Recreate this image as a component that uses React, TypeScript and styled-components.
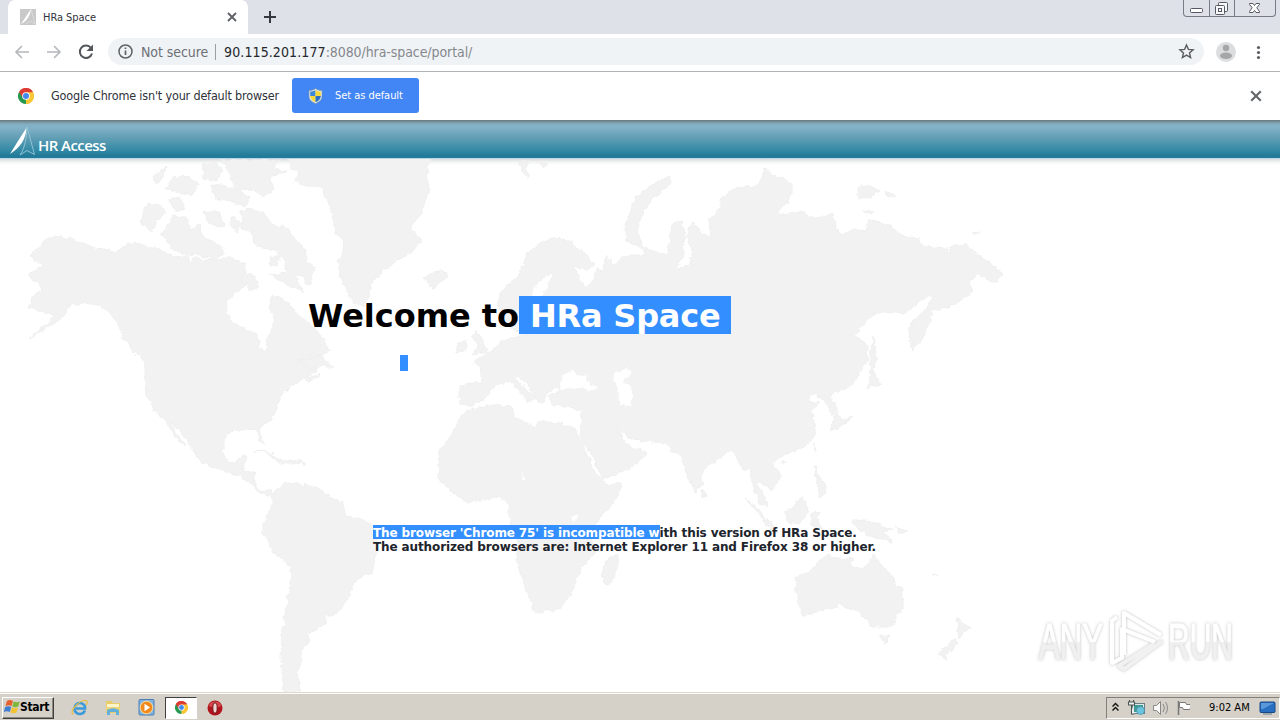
import React from "react";
import styled, { createGlobalStyle } from "styled-components";

const ui = `"DejaVu Sans Condensed", "DejaVu Sans", sans-serif`;
const verdana = `"DejaVu Sans", "Liberation Sans", sans-serif`;

const GlobalStyle = createGlobalStyle`
  * { box-sizing: border-box; }
  body { margin: 0; overflow: hidden; background: #fff; }
  svg { display: block; flex: none; }
`;

const Screen = styled.div`
  width: 1280px;
  height: 720px;
  display: flex;
  flex-direction: column;
  background: #fff;
  overflow: hidden;
`;

const TabStrip = styled.header`
  height: 34px;
  flex: none;
  display: flex;
  align-items: flex-start;
  padding: 0 4px 0 8px;
  background: #dee1e7;
`;

const Tab = styled.div`
  width: 240px;
  height: 34px;
  display: flex;
  align-items: center;
  padding: 0 11px 0 12px;
  background: #fff;
  border-radius: 7px 7px 0 0;
`;

const Label = styled.span<{ $size: number; $color?: string; $spacing?: number }>`
  font: ${(p) => p.$size}px/16px ${ui};
  color: ${(p) => p.$color ?? "#30333a"};
  letter-spacing: ${(p) => p.$spacing ?? 0}px;
  white-space: pre;
`;

const TabTitle = styled(Label)`
  flex: 1;
  margin-left: 7px;
  padding-top: 1px;
`;

const NewTab = styled.div`
  padding: 11px 0 0 16px;
`;

const WindowControls = styled.div`
  display: flex;
  height: 17px;
  margin-left: auto;
  border: 1px solid #777b85;
  border-top: 0;
  border-radius: 0 0 4px 4px;
`;

const WindowControl = styled.div<{ $width: number }>`
  width: ${(p) => p.$width}px;
  display: flex;
  justify-content: center;
  & + & { border-left: 1px solid #777b85; }
`;

const Toolbar = styled.div`
  height: 38px;
  flex: none;
  display: flex;
  align-items: center;
  padding: 0 11px 2px 12px;
  border-bottom: 1px solid #b1b3b5;
  background: #fff;
`;

const NavButtons = styled.div`
  display: flex;
  gap: 12px;
  width: 96px;
`;

const AddressBar = styled.div`
  flex: 1;
  height: 27px;
  display: flex;
  align-items: center;
  padding: 0 9px;
  border-radius: 14px;
  background: #f0f3f6;
`;

const Security = styled(Label)`
  margin-left: 7px;
`;

const Divider = styled.i`
  width: 1px;
  height: 16px;
  margin: 0 8px 0 7px;
  background: #9a9da2;
`;

const Url = styled(Label)`
  flex: 1;
`;

const ToolbarEnd = styled.div`
  display: flex;
  align-items: center;
  gap: 13px;
  margin-left: 12px;
`;

const InfoBar = styled.div`
  height: 48px;
  flex: none;
  display: flex;
  align-items: center;
  padding: 0 18px 1px 18px;
`;

const InfoText = styled(Label)`
  width: 258px;
  padding-left: 17px;
`;

const DefaultButton = styled.button`
  width: 127px;
  height: 35px;
  display: flex;
  align-items: center;
  gap: 12px;
  padding: 0 16px;
  border: 0;
  border-radius: 3px;
  background: #4285f4;
  margin-right: auto;
`;

const Banner = styled.div`
  height: 39px;
  flex: none;
  padding: 6px 0 0 8px;
  display: flex;
  background: linear-gradient(#68777c 0, #77959f 2px, #82adbf 4px, #84b3c8 7px, #5d9cb3 19px, #358aa6 30px, #217a98 36px, #237d9b 38px, #b9d6e4 38px);
`;

const BannerTitle = styled.span`
  font: 600 15px/20px "Open Sans", sans-serif;
  letter-spacing: -0.55px;
  color: #fff;
  margin: 9px 0 0 2px;
  white-space: pre;
`;

const Page = styled.main`
  flex: 1;
  position: relative;
  overflow: hidden;
  background: linear-gradient(#d9dddf 0, #f3f4f5 3px, #fff 6px);
`;

const Backdrop = styled.div`
  position: absolute;
  inset: 0;
`;

const Content = styled.div`
  position: relative;
  padding: 137px 0 0 308px;
`;

const Heading = styled.h1`
  margin: 0;
  height: 38px;
  display: flex;
  font: bold 32px/37px ${verdana};
  letter-spacing: -0.05px;
  color: #000;
  white-space: pre;
`;

const HeadingPart = styled.span<{ $width: number; $marked?: boolean }>`
  width: ${(p) => p.$width}px;
  padding-top: 2px;
  color: ${(p) => (p.$marked ? "#fff" : "#000")};
  background: ${(p) => (p.$marked ? "#338fff" : "none")};
  letter-spacing: ${(p) => (p.$marked ? -0.2 : -0.02)}px;
`;

const EmptyMark = styled.div`
  width: 8px;
  height: 16px;
  margin: 21px 0 155px 92px;
  background: #338fff;
`;

const Message = styled.p`
  margin: 0 0 0 65px;
  font: bold 12px/14px ${verdana};
  letter-spacing: -0.12px;
  color: #20242c;
  white-space: pre;
`;

const Marked = styled.span`
  display: inline-block;
  color: #fff;
  background: linear-gradient(#338fff 13px, transparent 13px);
  box-shadow: 0 -1px #338fff;
`;

const Watermark = styled.div`
  position: absolute;
  left: 1026px;
  top: 438px;
`;

const Taskbar = styled.footer`
  height: 28px;
  flex: none;
  display: flex;
  align-items: center;
  padding: 2px 0 0 2px;
  background: #d5d0c8;
  border-top: 1px solid #dcd9d2;
  box-shadow: inset 0 1px #fdfcfa;
`;

const StartButton = styled.div`
  width: 52px;
  height: 22px;
  display: flex;
  align-items: center;
  padding: 0 0 2px 1px;
  border: 1px solid;
  border-color: #fff #404040 #404040 #fff;
  box-shadow: inset -1px -1px #8a8680;
  font: bold 12px/16px "DejaVu Sans Condensed", sans-serif;
  letter-spacing: -0.3px;
  color: #000;
`;

const QuickLaunch = styled.div`
  display: flex;
  align-items: center;
  gap: 17px;
  margin-left: 17px;
`;

const ActiveTask = styled.div`
  width: 32px;
  height: 22px;
  display: grid;
  place-items: center;
  margin: 0 -7px 0 -7px;
  border: 1px solid;
  border-color: #404040 #fff #fff #404040;
  background: #fff;
`;

const Tray = styled.div`
  width: 174px;
  height: 22px;
  display: flex;
  align-items: center;
  margin-left: auto;
  padding-left: 4px;
  border: 1px solid;
  border-color: #85817a #fff #fff #85817a;
`;

const Clock = styled(Label)`
  margin: 0 9px 0 19px;
`;

const Cross = ({ size, color = "#5c5f64" }: { size: number; color?: string }) => (
  <svg width={size} height={size} viewBox="0 0 10 10">
    <path d="M1 1l8 8M9 1l-8 8" stroke={color} strokeWidth="1.8" />
  </svg>
);

const Arrow = ({ back }: { back?: boolean }) => (
  <svg width="20" height="20" viewBox="0 0 20 20">
    <g transform={back ? undefined : "translate(20 0) scale(-1 1)"}>
      <path d="M17 10H4M10 4L4 10l6 6" fill="none" stroke="#b5b7ba" strokeWidth="1.6" />
    </g>
  </svg>
);

const ChromeLogo = ({ size }: { size: number }) => (
  <svg width={size} height={size} viewBox="0 0 48 48">
    <path d="M24 24L3.2 12A24 24 0 0 1 44.8 12z" fill="#de3c31" />
    <path d="M24 24L44.8 12A24 24 0 0 1 24 48z" fill="#fbc735" />
    <path d="M24 24L24 48A24 24 0 0 1 3.2 12z" fill="#26994f" />
    <path d="M24 13h20.8A24 24 0 0 0 3.2 12L14.5 29.5z" fill="#de3c31" />
    <path d="M33.5 29.5L24 48A24 24 0 0 0 44.8 13H24z" fill="#fbc735" />
    <circle cx="24" cy="24" r="11.5" fill="#fff" />
    <circle cx="24" cy="24" r="9" fill="#4588ee" />
  </svg>
);

const Shield = () => (
  <svg width="15" height="16" viewBox="0 0 15 16">
    <path d="M7.500 .5C9 2 11.500 2.500 14 2.500V8c0 4-3 6-6.500 7.500C4 14 1 12 1 8V2.500C3.500 2.500 6 2 7.500 .5z" fill="#e4edf4" stroke="#8195a3" strokeWidth=".7" />
    <path d="M7.500 2C6 3 4 3.500 2.200 3.600V8h5.300z" fill="#3b86d8" />
    <path d="M7.500 2C9 3 11 3.500 12.800 3.600V8H7.500z" fill="#f5d83c" />
    <path d="M2.200 8c0 3 2.300 5 5.300 6.200V8z" fill="#f5d83c" />
    <path d="M12.800 8c0 3-2.300 5-5.300 6.200V8z" fill="#2c6fc4" />
  </svg>
);

const HrArrow = () => (
  <svg width="28" height="30" viewBox="0 0 28 30">
    <path d="M19 1C17.500 13 13 21 2 28L10 15z" fill="#fff" />
    <path d="M19 1L26.500 28.500L19 24.500L12 29C17 22 18.500 12 19 1z" fill="none" stroke="#8fc3d6" strokeWidth="1" />
  </svg>
);

const land = [
  "M55 235L78 241L95 248L108 250L114 253L125 246L135 242L143 245L155 248L165 253L172 257L188 256L190 263L195 258L210 260L222 258L232 258L240 262L246 264L244 272L250 280L244 287L235 293L228 300L226 312L232 322L245 328L258 336L260 349L267 350L266 338L273 328L274 316L270 308L272 296L285 300L295 312L303 318L316 330L325 343L330 351L318 356L300 360L306 366L317 370L305 378L290 386L283 395L277 405L274 416L265 423L258 430L264 443L259 440L256 429L240 430L225 433L223 453L228 463L237 461L242 455L247 456L243 470L255 473L255 486L261 490L272 491L271 495L260 494L250 483L237 475L219 470L200 461L192 448L178 427L170 424L186 447L176 438L165 421L154 409L147 394L145 375L145 362L135 352L124 340L118 325L110 312L98 305L80 303L70 305L62 317L49 327L29 339L46 325L55 315L50 314L35 309L28 308L33 295L42 290L40 283L26 276L35 270L43 267L30 255L38 248L45 240z",
  "M287 483L300 485L317 487L327 495L342 502L347 515L367 522L378 532L377 552L372 572L353 583L348 600L335 615L323 615L327 622L317 630L308 633L310 643L302 650L303 660L297 673L301 692L284 692L281 660L282 633L288 600L292 567L275 553L263 533L263 523L272 507L272 494z",
  "M288 156H432L426 174L429 190L424 205L420 215L411 228L421 240L412 253L395 262L382 273L372 282L369 297L363 306L353 303L346 290L340 275L338 262L343 250L344 241L335 232L333 220L328 200L320 187L305 185L294 181L300 174L292 170z",
  "M553 238L568 240L587 255L595 265L587 271L573 266L580 281L587 286L593 280L597 268L602 271L607 255L613 265L627 255L647 255L642 248L667 255L670 240L672 223L683 221L685 235L683 255L675 270L687 265L693 255L687 238L692 220L699 230L712 238L708 221L720 208V198L737 188L758 186L765 168L773 175L792 183V195L777 215L800 211L813 218L823 217L833 213L838 232L843 235L854 229L865 231L868 220L892 226L900 236L918 238L922 246L947 248L948 254L952 245L967 245L990 263L1003 273L995 283L978 275L970 283L972 293L947 308L932 310L930 321L923 338L913 351L909 331L913 321L930 305L933 295L920 301L907 313L873 313L855 335L868 345L867 361L852 385L835 393L830 397L837 408L832 416L827 403L815 393L805 400L818 404L810 411L816 428L812 440L803 447L783 455L773 463L782 477L772 490L760 482L754 482L765 497L768 508L760 503L752 484L749 468L743 470L732 450L723 455L703 470L702 483L695 492L685 470L680 455L672 450L665 443L633 440L617 428L625 443L632 447L647 452L633 467L603 480L600 470L580 437L582 409L567 407L553 405L548 396L557 393L560 386L548 392L543 403L538 402L530 388L520 376L514 379L537 398L528 402L510 381L497 385L483 400L470 407L460 403V385L482 383L480 366L473 363L492 350L502 341L520 336L526 318L518 332L505 323L498 305L500 293L520 273L527 255L543 241z",
  "M467 410L490 405L513 407L515 417L535 427L540 420L573 427L582 443L593 470L607 485L623 483L613 503L600 517L590 533L595 553L580 570L573 592L560 609L535 613L525 587L517 563L518 543L510 523L508 503L498 497L482 500L467 502L450 490L438 477L440 450L453 433L458 422z",
  "M618 553L618 566L610 585L603 583L602 575L605 562z",
  "M828 555L840 560L853 558L850 564L862 570L870 563L873 553L883 567L902 590L902 607L892 627H872L863 616L857 610L840 605L823 610L802 615L796 590L795 577L815 568L820 560z",
  "M880 636H889L885 645zM957 617L963 624L970 627L960 638L958 632zM955 638L958 643L945 658L938 654z",
  "M745 498L755 506L767 518L778 533L773 532L760 516zM783 512L792 508L802 497L809 511L800 524L788 522zM852 523L858 519L876 523L893 530L884 532L893 542L876 538L865 534zM810 514L820 512L817 519L823 530L812 526zM815 465L818 475L825 485L827 493L820 497L816 481zM830 431L837 410L842 421L854 415L846 423zM782 459L786 461L782 464zM813 445L816 444L814 451zM702 489L707 495L703 498z",
  "M873 337L877 358L873 370L880 384L867 388L871 378L870 358zM931 572L938 577L935 573zM896 527L909 531L900 534z",
  "M423 278L430 274L445 271L447 278L432 288zM477 331L483 340L488 351L473 355L478 344L471 337zM458 344L467 340L466 350L456 353zM670 176L672 183L653 198L642 215L637 231L642 248L627 242L625 225L631 210L635 198L647 188zM858 188L869 185L879 191L866 199L858 198zM885 192L896 196L889 198zM864 210L874 212L867 214zM972 233L980 232L975 236zM519 162L527 161L528 178L522 171zM537 162L549 163L543 168z",
  "M148 203L160 205L166 211L158 221L151 231L142 226L143 211zM168 225L174 216L186 217L191 231L199 224L204 238L214 240L224 253L214 259L201 255L188 254L173 251L166 239L161 234zM241 211L249 209L264 213L272 224L288 229L294 238L305 248L307 262L315 268L309 286L300 276L294 275L304 292L296 289L279 280L270 275L286 273L285 262L275 250L257 247L251 233L242 228zM153 175L166 167L164 177L155 185zM173 178L187 176L198 184L193 194L180 193L166 189zM202 164L216 162L222 171L216 182L204 178zM223 160H280L272 169L286 171L269 178L275 190L264 196L253 190L235 191L230 175zM211 185L229 187L250 197L244 207L231 202L216 199zM203 212L217 210L221 216L225 225L215 227L208 221zM231 216L241 222L238 234L231 226zM168 200L180 197L185 210L175 210zM240 278L252 272L260 287L250 290zM271 256L280 257L277 265L270 264z",
  "M253 453L261 450L275 458L280 463L293 464L305 463L300 461L288 460L275 457L263 450zM300 355L312 354L322 356L334 369L322 365L315 370L298 361zM304 379L321 374L309 382z",
].join("");

const lakes = "M563 375L573 370L578 376L587 374L586 380L597 388L593 391L580 388L560 390zM613 375L627 368L632 373L623 381L632 388V406L620 405L618 391zM552 275L545 275L533 291L534 314L521 334L537 333L560 324L546 317L543 295zM521 474L526 477L523 480zM571 516L578 514L574 522zM508 382L511 388L507 401L503 394z";

const WorldMap = () => (
  <svg width="1280" height="533" viewBox="0 159 1280 533">
    <defs>
      <filter id="coast" x="0" y="0" width="100%" height="100%">
        <feTurbulence type="fractalNoise" baseFrequency=".16" numOctaves="3" seed="4" />
        <feDisplacementMap in="SourceGraphic" scale="6" xChannelSelector="R" yChannelSelector="G" />
      </filter>
    </defs>
    <g filter="url(#coast)">
      <path d={land} fill="#f2f2f2" stroke="#efefef" strokeWidth="1" />
      <path d={lakes} fill="#fff" />
    </g>
  </svg>
);

const AnyRun = () => (
  <svg width="240" height="94" viewBox="1026 597 240 94">
    <defs>
      <filter id="halo" x="-10%" y="-20%" width="120%" height="140%">
        <feDropShadow dx="0" dy="0" stdDeviation="1.5" floodColor="#777" floodOpacity=".5" />
      </filter>
      <linearGradient id="shine" x1="0" y1="0" x2="0" y2="1">
        <stop offset=".49" stopColor="#fff" />
        <stop offset=".5" stopColor="#f0f0f0" />
      </linearGradient>
    </defs>
    <g filter="url(#halo)">
      <text x="1039" y="659" textLength="64" lengthAdjust="spacingAndGlyphs" fontFamily="Liberation Sans" fontSize="50" fill="url(#shine)" stroke="url(#shine)">ANY</text>
      <text x="1168" y="659" textLength="65" lengthAdjust="spacingAndGlyphs" fontFamily="Liberation Sans" fontSize="50" fill="url(#shine)" stroke="url(#shine)">RUN</text>
      <g fill="none" stroke="#fff" strokeWidth="4" strokeLinejoin="round">
        <path d="M1124 655V613L1161 635" />
        <path d="M1117 617L1112 621V663L1122 658V629L1155 642" />
        <path d="M1162 641L1124 669L1119 666L1154 644" stroke="#f1f1f1" />
      </g>
    </g>
  </svg>
);

export default function App() {
  return (
    <Screen>
      <GlobalStyle />
      <TabStrip>
        <Tab>
          <svg width="16" height="16" viewBox="0 0 16 16">
            <rect width="16" height="16" fill="#c9c9c9" />
            <path d="M11 0L1 15C7 12 10 7 11 0z" fill="#fff" />
            <path d="M11 0L15 15L11 12L6 15" fill="none" stroke="#dcdcdc" />
          </svg>
          <TabTitle $size={11} $spacing={-0.05}>HRa Space</TabTitle>
          <Cross size={10} />
        </Tab>
        <NewTab>
          <svg width="12" height="12" viewBox="0 0 12 12"><path d="M6 0v12M0 6h12" stroke="#35383d" strokeWidth="2" /></svg>
        </NewTab>
        <WindowControls>
          <WindowControl $width={25}>
            <svg width="25" height="16" viewBox="0 0 25 16"><rect x="6.500" y="8.500" width="12" height="4" rx="1" fill="#fff" stroke="#555963" /></svg>
          </WindowControl>
          <WindowControl $width={25}>
            <svg width="24" height="16" viewBox="0 0 24 16" fill="#f7f8fa" stroke="#555963">
              <rect x="8.500" y="2.500" width="9" height="9" rx="1" /><rect x="5.500" y="5.500" width="9" height="9" rx="1" /><rect x="8.500" y="8.500" width="3" height="3" />
            </svg>
          </WindowControl>
          <WindowControl $width={41}>
            <svg width="40" height="16" viewBox="0 0 40 16"><path d="M14.500 3.500h3.500l1.500 2 1.500-2h3.500v1l-2.700 3.300 2.700 3.700v1H21l-1.500-2-1.500 2h-3.500v-1l2.700-3.700-2.700-3.300z" fill="#fff" stroke="#555963" /></svg>
          </WindowControl>
        </WindowControls>
      </TabStrip>

      <Toolbar>
        <NavButtons>
          <Arrow back />
          <Arrow />
          <svg width="20" height="20" viewBox="0 0 20 20">
            <path d="M15 6A6.200 6.200 0 1 0 16 11.500" fill="none" stroke="#53565b" strokeWidth="2" />
            <path d="M17 2.500V9H10.500z" fill="#53565b" />
          </svg>
        </NavButtons>
        <AddressBar>
          <svg width="17" height="17" viewBox="0 0 17 17">
            <circle cx="8.500" cy="8.500" r="6.500" fill="none" stroke="#5f6368" strokeWidth="1.500" />
            <path d="M8.500 7.500V12M8.500 4.500V6" stroke="#5f6368" strokeWidth="1.700" />
          </svg>
          <Security $size={14} $color="#6c7075" $spacing={-0.08}>Not secure</Security>
          <Divider />
          <Url $size={14} $color="#85888d" $spacing={-0.08}>
            <Label $size={14} $color="#24272c" $spacing={0.1}>90.115.201.177</Label>:8080/hra-space/portal/
          </Url>
          <svg width="17" height="17" viewBox="0 0 17 17">
            <path d="M8.500 2l1.900 4.400 4.700.4-3.600 3.100 1.100 4.700-4.100-2.500-4.100 2.500 1.100-4.700-3.600-3.100 4.700-.4z" fill="none" stroke="#5a5d62" strokeWidth="1.400" />
          </svg>
        </AddressBar>
        <ToolbarEnd>
          <svg width="20" height="20" viewBox="0 0 20 20">
            <circle cx="10" cy="10" r="10" fill="#dcdddf" /><circle cx="10" cy="6" r="3.200" fill="#a5a6a8" /><ellipse cx="10" cy="13.700" rx="6" ry="3.200" fill="#a5a6a8" />
          </svg>
          <svg width="20" height="20" viewBox="0 0 20 20" fill="#5a5d62"><circle cx="9.500" cy="5.500" r="1.600" /><circle cx="9.500" cy="10.500" r="1.600" /><circle cx="9.500" cy="15.500" r="1.600" /></svg>
        </ToolbarEnd>
      </Toolbar>

      <InfoBar>
        <ChromeLogo size={16} />
        <InfoText $size={12.5} $spacing={-0.18}>Google Chrome isn't your default browser</InfoText>
        <DefaultButton>
          <Shield />
          <Label $size={11} $color="#fff" $spacing={-0.05}>Set as default</Label>
        </DefaultButton>
        <Cross size={12} color="#64676b" />
      </InfoBar>

      <Banner>
        <HrArrow />
        <BannerTitle>HR Access</BannerTitle>
      </Banner>

      <Page>
        <Backdrop><WorldMap /></Backdrop>
        <Content>
          <Heading>
            <HeadingPart $width={211}>Welcome to</HeadingPart>
            <HeadingPart $width={212} $marked>{" HRa Space "}</HeadingPart>
          </Heading>
          <EmptyMark />
          <Message>
            <Marked>The browser 'Chrome 75' is incompatible w</Marked>ith this version of HRa Space.{"\n"}
            The authorized browsers are: Internet Explorer 11 and Firefox 38 or higher.
          </Message>
        </Content>
        <Watermark><AnyRun /></Watermark>
      </Page>

      <Taskbar>
        <StartButton>
          <svg width="16" height="16" viewBox="0 0 16 16">
            <path d="M3 2q3-2 6 0L7.500 7q-3-1.500-6 0z" fill="#e8602c" /><path d="M9.700 2.500q3 1.500 6 0L14.300 7.500q-3 1.500-6 0z" fill="#7db83a" />
            <path d="M1.200 8q3-1.500 6 0L5.800 13q-3-1.500-6 0z" fill="#3e7fd0" /><path d="M8 8.500q3 1.500 6 0L12.500 13.500q-3 1.500-6 0z" fill="#f4c22e" />
          </svg>
          Start
        </StartButton>
        <QuickLaunch>
          <svg width="17" height="17" viewBox="0 0 17 17">
            <path d="M14 11.500A5.500 5.500 0 1 1 14 7.500L14 9.500H5" fill="none" stroke="#3b9ad9" strokeWidth="2.600" />
            <path d="M2 15.500C-2 12 8 1 15 1.500C17 2 16 5 15 6" fill="none" stroke="#e9bd3f" strokeWidth="1.200" />
          </svg>
          <svg width="16" height="16" viewBox="0 0 16 16">
            <path d="M1 1h6l1 2h7v10H1z" fill="#e9cd69" /><path d="M2 4h12v4H2z" fill="#fdf5c9" /><path d="M1 7h14v5H1z" fill="#ecd47a" />
            <path d="M2 15v-5q6-3.500 12 0v5h-3v-3H5v3z" fill="#62b0da" />
          </svg>
          <svg width="17" height="17" viewBox="0 0 17 17">
            <rect x="1" y=".5" width="15" height="15.500" rx="1" fill="#7fb3e2" stroke="#4b80b5" /><circle cx="8.500" cy="8.500" r="6.300" fill="#f08a1d" stroke="#ffdf9d" /><path d="M6.500 4.800v7.400l5.500-3.700z" fill="#fff" />
          </svg>
          <ActiveTask><ChromeLogo size={13} /></ActiveTask>
          <svg width="16" height="16" viewBox="0 0 16 16"><circle cx="8" cy="8" r="7.500" fill="#b0141c" /><path d="M1.500 6a7 7 0 0 1 13 0q-6 3-13 0" fill="#d4474b" /><ellipse cx="8" cy="8" rx="2.200" ry="5.200" fill="#eed7d3" stroke="#711014" /></svg>
        </QuickLaunch>
        <Tray>
          <svg width="9" height="12" viewBox="0 0 9 12"><path d="M1.500 4.500l3-3 3 3M1.500 8.500l3-3 3 3" fill="none" stroke="#111" strokeWidth="1.400" /></svg>
          <svg width="70" height="18" viewBox="0 0 70 18">
            <rect x="12.500" y="4.500" width="12" height="10" fill="#dfe9ea" stroke="#6b7d84" /><rect x="14" y="6" width="9" height="7" fill="#3f9a92" /><circle cx="20.500" cy="11.500" r="4" fill="#6cc3dc" stroke="#3a8aa5" strokeWidth=".6" />
            <path d="M9.500 1v2M13.500 1v2M8.500 3h6v3h-6zM11.500 6v9h3" fill="#f4f4f4" stroke="#4c5652" strokeWidth="1.100" />
            <path d="M33.500 6.500h3l4-4v13l-4-4h-3z" fill="#f8f8f8" stroke="#888" /><path d="M43 5q3 4 0 8M45.500 3q4 6 0 12" fill="none" stroke="#8c8c8c" />
            <path d="M58.500 2v14" stroke="#777" strokeWidth="1.500" /><path d="M59.500 3.500h6l1 2h6l-3 5h-6l-1-2h-3z" fill="#fff" stroke="#777" />
          </svg>
          <Clock $size={11} $color="#000" $spacing={0}>9:02 AM</Clock>
          <svg width="17" height="14" viewBox="0 0 17 14"><rect x="1" y="1" width="15" height="10.500" rx="1" fill="#286fc2" stroke="#174985" /><path d="M2 2h13L4 8H2z" fill="#5998da" /><path d="M4 13h9" stroke="#62788c" /></svg>
        </Tray>
      </Taskbar>
    </Screen>
  );
}
